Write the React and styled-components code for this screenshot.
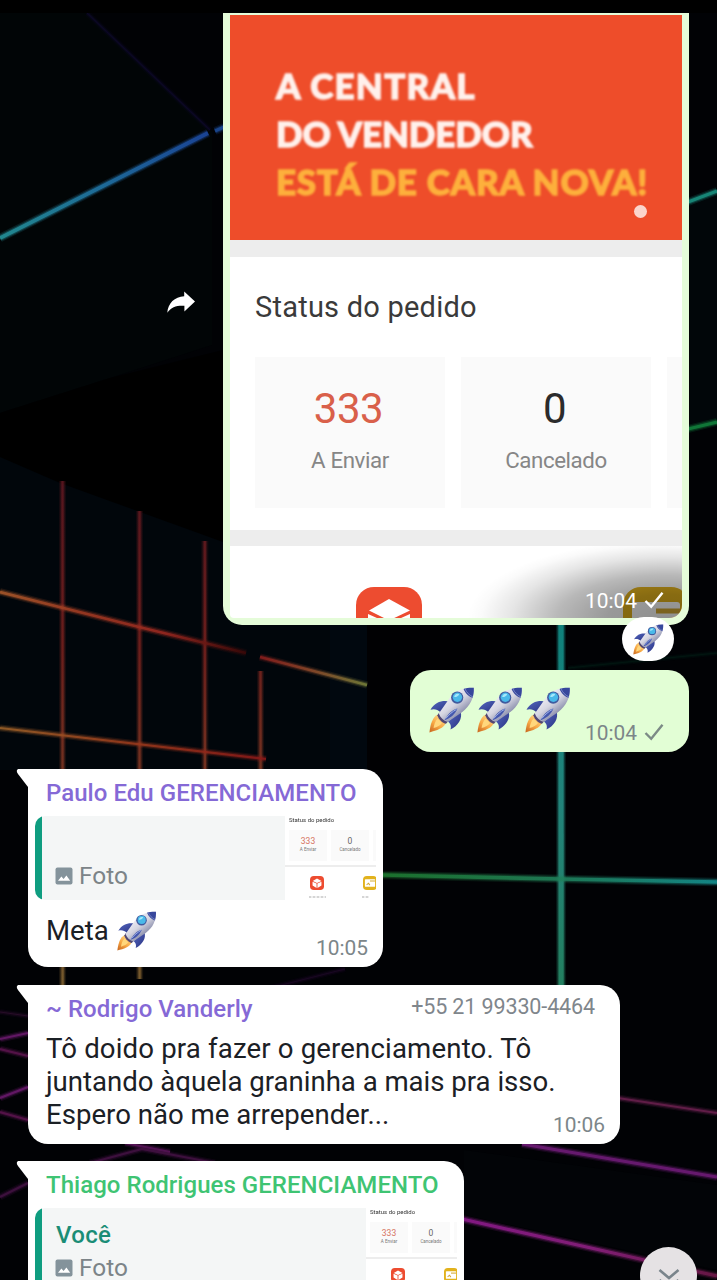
import React from "react";
import styled, { createGlobalStyle } from "styled-components";

const GlobalStyle = createGlobalStyle`
  * { box-sizing: border-box; }
  body { margin: 0; background: #000; }
`;

const Screen = styled.div`
  position: relative;
  width: 717px;
  height: 1280px;
  overflow: hidden;
  background: #010204;
  font-family: Roboto, "Liberation Sans", sans-serif;
  color: #1b2025;
`;

const WallpaperSvg = styled.svg`
  position: absolute;
  inset: 0;
`;

const StatusBar = styled.div`
  position: relative;
  height: 13px;
  background: #000;
`;

const Thread = styled.main`
  position: relative;
  display: flex;
  flex-direction: column;
  padding: 0 28px;
`;

const OutgoingRow = styled.div`
  display: flex;
  justify-content: flex-end;
  align-items: center;
  gap: 28px;
  margin-bottom: ${(p) => p.$gap}px;
`;

const ShareSvg = styled.svg`
  display: block;
  margin-top: -34px;
`;

const PhotoBubble = styled.div`
  position: relative;
  width: 466px;
  height: 612px;
  padding: 2px 7px 7px;
  background: #e5fcd9;
  border-radius: 0 0 19px 19px;
`;

const Photo = styled.div`
  position: relative;
  height: 603px;
  display: flex;
  flex-direction: column;
  background: #fff;
  border-radius: 0 0 13px 4px;
  overflow: hidden;
`;

const Banner = styled.div`
  position: relative;
  height: 225px;
  flex: none;
  padding: 46px 0 0 46px;
  background: #ee4d2a;
`;

const BannerLine = styled.div`
  height: 48px;
  line-height: 48px;
  font-family: Lato, sans-serif;
  font-weight: 900;
  font-size: 35px;
  letter-spacing: ${(p) => p.$track}px;
  white-space: nowrap;
  color: ${(p) => (p.$accent ? "#fdb03c" : "#fff1ec")};
  -webkit-text-stroke: 1.3px ${(p) => (p.$accent ? "#fdb03c" : "#fff1ec")};
  filter: blur(0.8px);
`;

const BannerDot = styled.span`
  position: absolute;
  right: 35px;
  bottom: 22px;
  width: 13px;
  height: 13px;
  border-radius: 50%;
  background: #fbd5cb;
`;

const Divider = styled.div`
  height: ${(p) => p.$h}px;
  flex: none;
  background: #ededed;
`;

const StatusPanel = styled.section`
  height: 273px;
  flex: none;
  padding: 30px 0 0 25px;
`;

const StatusTitle = styled.div`
  height: 40px;
  line-height: 40px;
  margin-bottom: 30px;
  font-size: 29px;
  letter-spacing: 0.23px;
  color: #3a3a3a;
`;

const StatusCards = styled.div`
  display: flex;
  gap: 16px;
`;

const StatusCard = styled.div`
  width: 190px;
  height: 151px;
  flex: none;
  padding-top: 26px;
  background: #fafafa;
  text-align: center;
`;

const StatusValue = styled.div`
  height: 52px;
  line-height: 52px;
  font-size: 42px;
  letter-spacing: -0.4px;
  color: ${(p) => (p.$hot ? "#d9604a" : "#2b2b2b")};
  padding-right: 3px;
`;

const StatusLabel = styled.div`
  height: 50px;
  line-height: 50px;
  font-size: 22.3px;
  letter-spacing: -0.4px;
  color: #868686;
`;

const Shortcuts = styled.div`
  flex: 1;
  padding: 41px 0 0 126px;
  display: flex;
  gap: 201px;
  svg { flex: none; }
`;

const PhotoShade = styled.div`
  position: absolute;
  right: 0;
  bottom: 0;
  width: 240px;
  height: 72px;
  background: radial-gradient(ellipse 200px 78px at 94% 100%, rgba(0, 0, 0, 0.44), rgba(0, 0, 0, 0.4) 30%, rgba(0, 0, 0, 0.28) 55%, rgba(0, 0, 0, 0.1) 78%, rgba(0, 0, 0, 0.02) 93%, transparent);
`;

const Stamp = styled.div`
  position: absolute;
  right: ${(p) => p.$right}px;
  bottom: ${(p) => p.$bottom}px;
  display: flex;
  align-items: center;
  gap: 7px;
  height: 24px;
  line-height: 24px;
  font-size: 20.9px;
  color: ${(p) => (p.$light ? "#fff" : "#7c8689")};
`;

const Reaction = styled.div`
  position: absolute;
  right: 15px;
  bottom: -36px;
  width: 52px;
  height: 44px;
  display: flex;
  align-items: center;
  justify-content: center;
  border-radius: 24px;
  background: #fff;
`;

const EmojiBubble = styled.div`
  position: relative;
  display: flex;
  gap: 2px;
  width: 279px;
  height: 82px;
  padding: 17px 0 0 19px;
  border-radius: 21px;
  background: #e2fed5;
`;

const IncomingBubble = styled.article`
  position: relative;
  width: ${(p) => p.$w}px;
  height: ${(p) => p.$h}px;
  margin-bottom: ${(p) => p.$gap || 0}px;
  padding: 8px 7px 0;
  border-radius: 0 20px 20px 20px;
  background: #fff;
`;

const TailSvg = styled.svg`
  position: absolute;
  left: -13px;
  top: 0;
`;

const Sender = styled.div`
  height: 32px;
  line-height: 33px;
  padding-left: 11px;
  font-weight: 500;
  font-size: 24px;
  letter-spacing: 0.04px;
  white-space: nowrap;
  color: ${(p) => p.$color};
`;

const SenderRow = styled.header`
  display: flex;
  justify-content: space-between;
  padding-right: 18px;
`;

const Phone = styled.div`
  height: 28px;
  line-height: 28px;
  font-size: 21.5px;
  letter-spacing: -0.12px;
  color: #7f868c;
`;

const MessageText = styled.div`
  margin-top: ${(p) => p.$top}px;
  padding-left: 11px;
  line-height: 33px;
  font-size: 27.6px;
`;

const MessageLine = styled.div`
  display: flex;
  align-items: center;
  gap: 8px;
  height: 33px;
  letter-spacing: ${(p) => p.$track || 0}px;
  white-space: nowrap;
`;

const Quote = styled.div`
  display: flex;
  height: 84px;
  margin-top: ${(p) => p.$top}px;
  border-radius: 10px 0 0 10px;
  background: linear-gradient(90deg, #0f9d80 7px, #f4f6f6 7px);
  overflow: hidden;
`;

const QuoteBody = styled.div`
  flex: 1;
  display: flex;
  flex-direction: column;
  justify-content: flex-end;
  padding: 0 0 12px 20px;
`;

const QuoteAuthor = styled.div`
  height: 38px;
  line-height: 34px;
  font-weight: 500;
  font-size: 24px;
  letter-spacing: 0.3px;
  padding-left: 1px;
  color: #1a8d76;
`;

const QuoteKind = styled.div`
  display: flex;
  align-items: center;
  gap: 6px;
  height: 24px;
  line-height: 24px;
  font-size: 24.4px;
  color: #7c8488;
`;

const Thumb = styled.div`
  width: 91px;
  padding: 0 0 0 4px;
  background: #fff;
  overflow: hidden;
`;

const ThumbTitle = styled.div`
  height: 8px;
  line-height: 8px;
  font-size: 6px;
  color: #333;
  white-space: nowrap;
  filter: blur(0.4px);
`;

const ThumbCards = styled.div`
  display: flex;
  gap: 4px;
  margin-top: 6px;
  height: 33px;
`;

const ThumbCard = styled.div`
  width: 38px;
  height: 31px;
  flex: none;
  padding-top: 6px;
  text-align: center;
  font-size: 4.5px;
  line-height: 8px;
  color: #777;
  background: #fafafa;
`;

const ThumbValue = styled.div`
  font-size: 8.5px;
  line-height: 10px;
  color: ${(p) => (p.$hot ? "#d77461" : "#666")};
`;

const ThumbDivider = styled.div`
  height: 2px;
  margin: 2px 0 0 -4px;
  background: #ededed;
`;

const ThumbIcons = styled.div`
  display: flex;
  gap: 38px;
  margin: 9px 0 0 21px;
`;

const ThumbIcon = styled.div`
  width: 15px;
  flex: none;
  svg { display: block; }
`;

const ThumbCaption = styled.div`
  width: ${(p) => p.$w}px;
  height: 2px;
  margin: 6px 0 0 -1px;
  background: repeating-linear-gradient(90deg, #d5d5d5 0 2px, #efefef 2px 4px);
`;

const ScrollButton = styled.button`
  position: absolute;
  left: 640px;
  top: 1247px;
  width: 57px;
  height: 57px;
  display: flex;
  justify-content: center;
  padding: 22px 0 0;
  border: 0;
  border-radius: 50%;
  background: #e5e2e4;
`;

function Neon({ d, color, w = 3, glow = 0.35, core = 0.85 }) {
  return (
    <g fill="none" stroke={color}>
      <path d={d} strokeWidth={w + 4} opacity={glow * 0.5} />
      <path d={d} strokeWidth={w + 1.5} opacity={glow} />
      <path d={d} strokeWidth={w - 0.8} opacity={core} />
    </g>
  );
}

function Ramp({ id, from, to, stops }) {
  return (
    <linearGradient id={id} gradientUnits="userSpaceOnUse" x1={from[0]} y1={from[1]} x2={to[0]} y2={to[1]}>
      {stops.map((c, i) => (
        <stop key={i} offset={i / (stops.length - 1)} stopColor={c} />
      ))}
    </linearGradient>
  );
}

function Wallpaper() {
  return (
    <WallpaperSvg width="717" height="1280" viewBox="0 0 717 1280">
      <defs>
        <Ramp id="beam" from={[0, 238]} to={[208, 133]} stops={["#24939a", "#2072a4", "#1c48a0"]} />
        <Ramp id="wallTop" from={[0, 592]} to={[246, 653]} stops={["#a8582a", "#a03a22", "#9a2820", "#3a0808"]} />
        <Ramp id="wallTopEnd" from={[260, 657]} to={[367, 685]} stops={["#8a1c1c", "#8a4a2a", "#75803a"]} />
        <Ramp id="wallLow" from={[0, 728]} to={[266, 759]} stops={["#9a6028", "#9a3a1c", "#8a1818"]} />
        <Ramp id="post" from={[0, 480]} to={[0, 985]} stops={["#641822", "#7e221e", "#8a4226", "#8a6a34"]} />
        <Ramp id="pillar" from={[0, 625]} to={[0, 985]} stops={["#108c86", "#258f85", "#268a68"]} />
        <Ramp id="cross" from={[383, 875]} to={[717, 882]} stops={["#1e7a30", "#208058", "#159090"]} />
        <Ramp id="floorA" from={[464, 0]} to={[717, 0]} stops={["#8c1a8c", "#8c2080", "#6e1848"]} />
      </defs>
      <rect width="717" height="1280" fill="#010205" />
      <path d="M0 13H90L212 132V345L110 378L0 413Z" fill="#010506" />
      <path d="M0 413L110 378L223 350V542L60 483L0 457Z" fill="#000" />
      <path d="M0 457L60 483L223 542L367 590V770H0Z" fill="#01060b" />
      <path d="M330 625H367V770H330Z" fill="#01080f" />
      <path d="M367 625H555V770H367Z" fill="#010103" />
      <path d="M690 200L717 190V420L690 428Z" fill="#010609" />
      <path d="M464 1150L717 1185V1270L464 1215Z" fill="#020407" />
      <Neon d="M87 13L210 130" color="#0d0828" w={2} />
      <Neon d="M0 238L208 133" color="url(#beam)" w={4.5} />
      <Neon d="M215 131L224 127" color="#1c4a96" w={4} />
      <Neon d="M688 202L717 191" color="#1a9080" w={4} />
      <Neon d="M688 429L717 422" color="#12803c" w={4} />
      <g>
        {[
          [62.5, 481, 985],
          [139.5, 511, 979],
          [204.8, 541, 770],
          [260.5, 671, 770],
        ].map(([x, a, b]) => (
          <Neon key={x} d={`M${x} ${a}L${x + 0.1} ${b}`} color="url(#post)" w={3} core={0.7} />
        ))}
      </g>
      <Neon d="M0 592L139 627L246 653" color="url(#wallTop)" w={3.5} />
      <Neon d="M260 657L367 685" color="url(#wallTopEnd)" w={3.2} />
      <Neon d="M0 728L266 759" color="url(#wallLow)" w={3} />
      <Neon d="M561 625L561.1 985" color="url(#pillar)" w={6} />
      <Neon d="M383 875L561 879L717 882" color="url(#cross)" w={4.5} />
      <Neon d="M568 668L717 653" color="#041c14" w={1.5} />
      <Neon d="M618 1098L717 1113" color="#68204e" w={3} />
      <Neon d="M522 1144L717 1177" color="#701c78" w={4} />
      <Neon d="M462 1219L640 1259L717 1276" color="url(#floorA)" w={4} />
      <Neon d="M0 1012L28 1016" color="#2a0e2c" w={2} />
      <Neon d="M0 1039L28 1033M0 1098L28 1087" color="#6a1a6c" w={3} />
      <Neon d="M0 1049L28 1056M0 1112L28 1120" color="#5a144e" w={3} />
      <Neon d="M125 1143L170 1152" color="#5e165e" w={3} />
      <Neon d="M0 1197L28 1183M90 1163L142 1149L215 1163" color="#421242" w={3} />
      <Neon d="M270 988L345 969" color="#1c0826" w={2} />
    </WallpaperSvg>
  );
}

function Rocket({ size = 46 }) {
  return (
    <svg width={size} height={size} viewBox="0 0 46 46">
      <defs>
        <linearGradient id="hull" x1="0.25" y1="0.2" x2="0.7" y2="0.75">
          <stop offset="0" stopColor="#f3f1f8" />
          <stop offset="0.5" stopColor="#d5d5e1" />
          <stop offset="1" stopColor="#8589a8" />
        </linearGradient>
        <linearGradient id="fin" x1="0" y1="0" x2="1" y2="1">
          <stop offset="0" stopColor="#5467bf" />
          <stop offset="1" stopColor="#293282" />
        </linearGradient>
        <linearGradient id="flame" x1="0.8" y1="0.1" x2="0.2" y2="1">
          <stop offset="0" stopColor="#ffd684" />
          <stop offset="0.55" stopColor="#f8a945" />
          <stop offset="1" stopColor="#cf7025" />
        </linearGradient>
      </defs>
      <path d="M20.5 14.5C14 13 6 14.5 1.5 22.8C5 21.6 8.6 22.4 11.5 25.2Z" fill="url(#fin)" />
      <path d="M31.5 24.5C34 31 29 39 21.5 42.6C22.5 39 21.6 36.6 19 34.4Z" fill="url(#fin)" />
      <path d="M9 27.6C3.5 30 1.5 37 0.4 45.4C8 43.4 14.6 41.5 17.3 35.6Z" fill="url(#flame)" />
      <path d="M8.6 31.5C6.2 34 5 37.5 4.6 41C8.4 40 11.2 38.6 13 36Z" fill="#ffd77c" />
      <path d="M10.2 25.4L19.2 34.2L17 36.8C13.5 36.2 9.4 32.2 8.4 28.2Z" fill="#514773" />
      <path d="M44.8 0.8C34 0.4 25 4.2 19.8 12.2L9.8 26.4C11.4 30.6 14.4 33.6 18.6 35L33 25.2C41.4 19 45.2 10.6 44.8 0.8Z" fill="url(#hull)" />
      <path d="M44.8 0.8C40.6 0.6 37.4 1 34.6 1.9C36 5.8 39.6 9.4 43.5 10.8C44.6 7.6 45 4.4 44.8 0.8Z" fill="#37479c" />
      <path d="M35.8 1.5C37.6 5.4 40.3 8.2 43.8 9.9" fill="none" stroke="#7786c6" strokeWidth="1" />
      <circle cx="28.2" cy="10.6" r="6.1" fill="#405b9f" />
      <circle cx="28.4" cy="10.3" r="4.7" fill="#49b9e9" />
      <path d="M25.2 10C25.2 7.4 28 6 30.2 7.2C29.4 9.2 27.4 10.2 25.2 10Z" fill="#a4e8fb" />
      <path d="M28.5 21.5C24 22.3 19.5 26 15.4 33.2C20.8 31.6 26.4 27.3 28.5 21.5Z" fill="#4457ad" />
      <path d="M27.5 22.4C23.5 24.5 20 27.7 16.8 31.5" stroke="#a1b4ea" strokeWidth="1" fill="none" />
    </svg>
  );
}

function Check({ color }) {
  return (
    <svg width="20" height="18" viewBox="0 0 20 18">
      <path d="M1.5 9L7.2 14.8L18.5 0.8" fill="none" stroke={color} strokeWidth="2.4" />
    </svg>
  );
}

function BoxIcon({ size }) {
  return (
    <svg width={size} height={size} viewBox="0 0 66 66">
      <rect width="66" height="66" rx="18" fill="#ed4c30" />
      <path d="M13 23.5L33 12L54 23.5L33 33.5Z" fill="#fff" />
      <path d="M12 27L31 35.5V56L12 45ZM54 27L35 35.5V56L54 45Z" fill="#fff" />
    </svg>
  );
}

function CardIcon({ size }) {
  return (
    <svg width={size} height={size} viewBox="0 0 66 66">
      <rect width="66" height="66" rx="18" fill="#e2b21d" />
      <rect x="9" y="15" width="48" height="36" rx="3" fill="#fff" />
      <path d="M33 24H57" stroke="#d6ab34" strokeWidth="5" />
      <path d="M17 42L26 34L32 43" fill="none" stroke="#d6ab34" strokeWidth="5" />
    </svg>
  );
}

function PictureIcon() {
  return (
    <svg width="18" height="18" viewBox="0 0 18 18">
      <rect x="0.5" y="0.5" width="17" height="17" rx="2" fill="#84939b" />
      <path d="M3 13.8L6.4 9.6L8.6 12L11.4 8.4L15.2 13.8Z" fill="#fff" />
    </svg>
  );
}

function Tail() {
  return (
    <TailSvg width="14" height="20" viewBox="0 0 14 20">
      <path d="M14 0H4C1.4 0 1.2 2.6 3 5L13 18H14Z" fill="#fff" />
    </TailSvg>
  );
}

function QuotedPhoto({ author, top }) {
  return (
    <Quote $top={top}>
      <QuoteBody>
        {author && <QuoteAuthor>{author}</QuoteAuthor>}
        <QuoteKind>
          <PictureIcon />
          Foto
        </QuoteKind>
      </QuoteBody>
      <Thumb>
        <ThumbTitle>Status do pedido</ThumbTitle>
        <ThumbCards>
          <ThumbCard>
            <ThumbValue $hot>333</ThumbValue>A Enviar
          </ThumbCard>
          <ThumbCard>
            <ThumbValue>0</ThumbValue>Cancelado
          </ThumbCard>
          <ThumbCard />
        </ThumbCards>
        <ThumbDivider />
        <ThumbIcons>
          <ThumbIcon>
            <BoxIcon size={14} />
            <ThumbCaption $w={17} />
          </ThumbIcon>
          <ThumbIcon>
            <CardIcon size={14} />
            <ThumbCaption $w={7} />
          </ThumbIcon>
        </ThumbIcons>
      </Thumb>
    </Quote>
  );
}

export default function App() {
  return (
    <Screen>
      <GlobalStyle />
      <Wallpaper />
      <StatusBar />
      <Thread>
        <OutgoingRow $gap={45}>
          <ShareSvg width="28" height="22" viewBox="0 0 28 22">
            <path d="M17.2 0.5L28 10.4L17.4 20.6V14.8C9.5 14.4 4.4 16 0.3 21.8C1 11.8 7.6 6 17.2 5.2Z" fill="#fff" />
          </ShareSvg>
          <PhotoBubble>
            <Photo>
              <Banner>
                <BannerLine $track={1.25}>A CENTRAL</BannerLine>
                <BannerLine $track={-0.15}>DO VENDEDOR</BannerLine>
                <BannerLine $accent $track={0.75}>ESTÁ DE CARA NOVA!</BannerLine>
                <BannerDot />
              </Banner>
              <Divider $h={17} />
              <StatusPanel>
                <StatusTitle>Status do pedido</StatusTitle>
                <StatusCards>
                  <StatusCard>
                    <StatusValue $hot>333</StatusValue>
                    <StatusLabel>A Enviar</StatusLabel>
                  </StatusCard>
                  <StatusCard>
                    <StatusValue>0</StatusValue>
                    <StatusLabel>Cancelado</StatusLabel>
                  </StatusCard>
                  <StatusCard />
                </StatusCards>
              </StatusPanel>
              <Divider $h={16} />
              <Shortcuts>
                <BoxIcon size={66} />
                <CardIcon size={66} />
              </Shortcuts>
              <PhotoShade />
            </Photo>
            <Stamp $light $right={25} $bottom={12}>
              10:04
              <Check color="#fff" />
            </Stamp>
            <Reaction>
              <Rocket size={31} />
            </Reaction>
          </PhotoBubble>
        </OutgoingRow>
        <OutgoingRow $gap={17}>
          <EmojiBubble>
            <Rocket />
            <Rocket />
            <Rocket />
            <Stamp $right={25} $bottom={7}>
              10:04
              <Check color="#7c8a86" />
            </Stamp>
          </EmojiBubble>
        </OutgoingRow>
        <IncomingBubble $w={355} $h={198} $gap={18}>
          <Tail />
          <Sender $color="#8569d6">Paulo Edu GERENCIAMENTO</Sender>
          <QuotedPhoto top={7} />
          <MessageText $top={14}>
            <MessageLine>
              Meta <Rocket size={40} />
            </MessageLine>
          </MessageText>
          <Stamp $right={15} $bottom={7}>10:05</Stamp>
        </IncomingBubble>
        <IncomingBubble $w={592} $h={159} $gap={17}>
          <Tail />
          <SenderRow>
            <Sender $color="#8569d6">~ Rodrigo Vanderly</Sender>
            <Phone>+55 21 99330-4464</Phone>
          </SenderRow>
          <MessageText $top={7}>
            <MessageLine $track={0.15}>Tô doido pra fazer o gerenciamento. Tô</MessageLine>
            <MessageLine $track={-0.02}>juntando àquela graninha a mais pra isso.</MessageLine>
            <MessageLine>Espero não me arrepender...</MessageLine>
          </MessageText>
          <Stamp $right={15} $bottom={7}>10:06</Stamp>
        </IncomingBubble>
        <IncomingBubble $w={436} $h={180}>
          <Tail />
          <Sender $color="#3fc473">Thiago Rodrigues GERENCIAMENTO</Sender>
          <QuotedPhoto author="Você" top={7} />
        </IncomingBubble>
      </Thread>
      <ScrollButton aria-label="Ir para o fim">
        <svg width="22" height="20" viewBox="0 0 22 20">
          <path d="M1.5 1L11 9L20.5 1M1.5 11L11 19L20.5 11" fill="none" stroke="#79848b" strokeWidth="2.6" />
        </svg>
      </ScrollButton>
    </Screen>
  );
}
